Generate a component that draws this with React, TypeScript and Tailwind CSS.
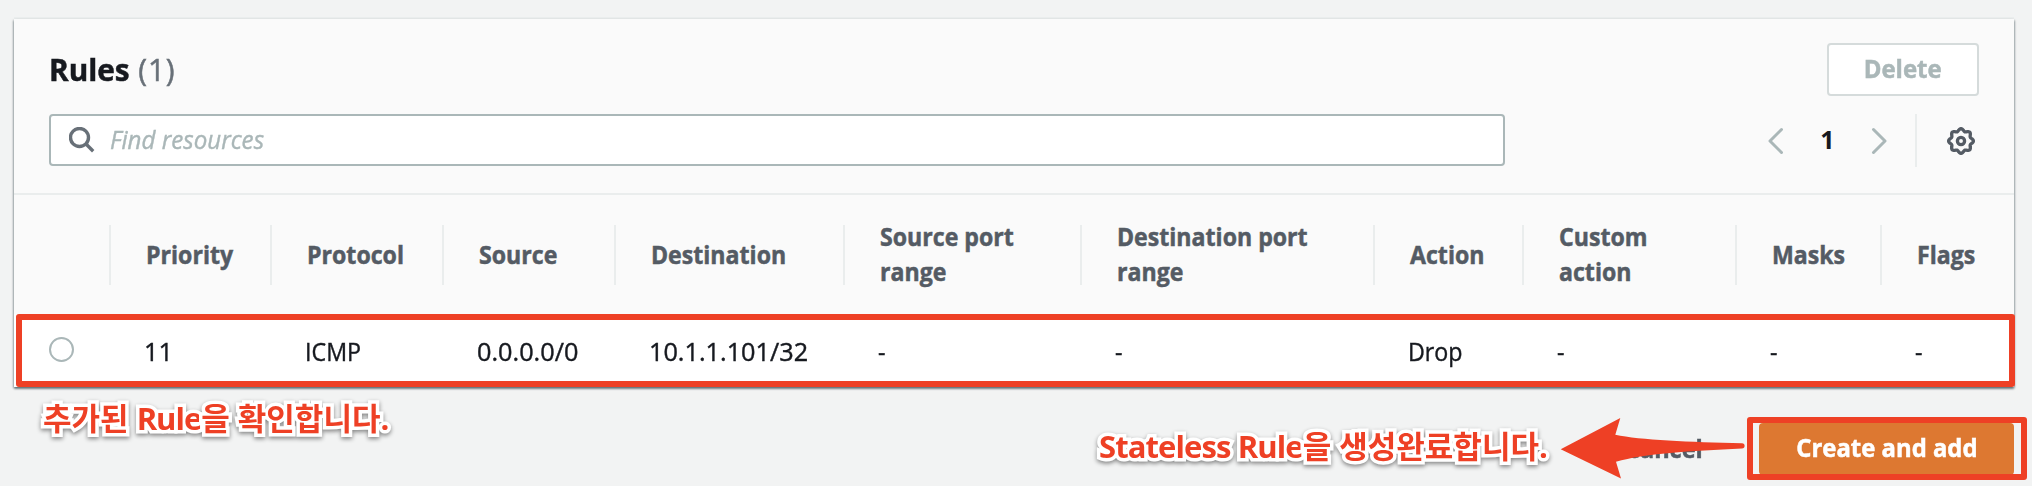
const columns: { label: string; value: string; lines?: [string, string] }[] = [
  { label: "Priority", value: "11" },
  { label: "Protocol", value: "ICMP" },
  { label: "Source", value: "0.0.0.0/0" },
  { label: "Destination", value: "10.1.1.101/32" },
  { label: "Source port range", value: "-", lines: ["Source port", "range"] },
  { label: "Destination port range", value: "-", lines: ["Destination port", "range"] },
  { label: "Action", value: "Drop" },
  { label: "Custom action", value: "-", lines: ["Custom", "action"] },
  { label: "Masks", value: "-" },
  { label: "Flags", value: "-" },
];

const grid = "grid grid-cols-[95px_161px_172px_172px_229px_237px_293px_149px_213px_145px_134px]";

const noteText =
  "absolute whitespace-nowrap text-[31px] leading-[40px] font-bold text-[#ee4025] [-webkit-text-stroke:7px_white] [paint-order:stroke_fill] [filter:drop-shadow(0_2px_2px_rgba(0,0,0,0.45))]";

function SearchIcon() {
  return (
    <svg className="size-[26px] shrink-0" viewBox="0 0 26 26" fill="none" stroke="#687078" strokeWidth="3.4">
      <circle cx="10.5" cy="10.5" r="9" />
      <path d="M16.8 16.8 24.2 24.2" />
    </svg>
  );
}

function Chevron({ flip }: { flip?: boolean }) {
  return (
    <svg className={flip ? "h-7 w-4 -scale-x-100" : "h-7 w-4"} viewBox="0 0 16 28" fill="none" stroke="#aab7b8" strokeWidth="3" strokeLinecap="round" strokeLinejoin="round">
      <path d="M13.5 2.5 2 14l11.5 11.5" />
    </svg>
  );
}

// Eight-toothed outline: a circle whose radius swings once per tooth.
const gearOutline = Array.from({ length: 96 }, (_, i) => {
  const a = (i / 96) * Math.PI * 2;
  const r = 11.2 + 1.2 * Math.cos(8 * a);
  return `${(14 + r * Math.cos(a)).toFixed(2)},${(14 + r * Math.sin(a)).toFixed(2)}`;
}).join(" ");

function GearIcon() {
  return (
    <svg className="size-7" viewBox="0 0 28 28" fill="none" stroke="#545b64" strokeWidth="3.3" strokeLinejoin="round">
      <polygon points={gearOutline} />
      <circle cx="14" cy="14" r="3.6" />
    </svg>
  );
}

export default function App() {
  return (
    <div className="relative h-[486px] w-[2032px] overflow-hidden bg-[#f2f3f3] pt-[19px] font-['Open_Sans','Noto_Sans_CJK_KR',sans-serif] text-[25px] text-[#16191f]">
      <section className="ml-[14px] h-[368px] w-[2000px] bg-[#fafafa] shadow-[0_2px_2px_0_rgba(0,28,36,0.4),1px_1px_2px_0_rgba(0,28,36,0.22),-1px_1px_2px_0_rgba(0,28,36,0.22),0_-2px_0_0_#eaeded]">
        <header className="flex h-44 flex-col border-b-2 border-[#eaeded] pt-6 pr-[35px] pl-[35px]">
          <div className="flex h-[53px] items-center justify-between">
            <h2 className="origin-left scale-x-[0.96] pb-px text-[31px] leading-[50px] font-bold [-webkit-text-stroke:0.5px_#16191f]">
              Rules <span className="ml-px font-medium tracking-[0.8px] text-[#687078] [-webkit-text-stroke:0.5px_#687078]">(1)</span>
            </h2>
            <button className="h-[53px] w-[152px] rounded-[4px] border-2 border-[#d5dbdb] bg-white pb-0.5 font-bold text-[#aab7b8]">
              <span className="inline-block scale-x-[0.96] [-webkit-text-stroke:0.5px_#aab7b8]">Delete</span>
            </button>
          </div>
          <div className="mt-[18px] flex items-start">
            <label className="flex h-[52px] w-[1456px] items-center gap-[15px] rounded-[4px] border-2 border-[#aab7b8] bg-white pl-[18px]">
              <SearchIcon />
              <span className="inline-block origin-left scale-x-[0.965] pb-px text-[#aab7b8] italic [-webkit-text-stroke:0.4px_#aab7b8]">Find resources</span>
            </label>
            <nav className="ml-auto flex h-[53px] items-center">
              <Chevron />
              <span className="w-[87px] pb-px text-center font-bold">1</span>
              <Chevron flip />
              <span className="ml-[28px] h-[53px] w-0.5 bg-[#eaeded]" />
              <span className="mr-1 ml-[30px]">
                <GearIcon />
              </span>
            </nav>
          </div>
        </header>

        <div className={`${grid} h-[119px] pt-[30px]`}>
          <span />
          {columns.map((c) => (
            <div key={c.label} className="flex h-[60px] items-center border-l-2 border-[#eaeded] pl-[35px] leading-[35px] font-bold text-[#545b64] [-webkit-text-stroke:0.5px_#545b64]">
              <span className="origin-left -translate-y-px scale-x-[0.925] whitespace-nowrap">
                {c.lines ? (
                  <>
                    {c.lines[0]}
                    <br />
                    {c.lines[1]}
                  </>
                ) : (
                  c.label
                )}
              </span>
            </div>
          ))}
        </div>

        <div className={`${grid} h-[73px] items-center bg-white`}>
          <span className="mb-0.5 ml-[35px] size-[25px] rounded-full border-2 border-[#aab7b8] bg-white" />
          {columns.map((c) => (
            <div key={c.label} className="pt-0.5 pl-[35px] [-webkit-text-stroke:0.4px_#16191f]">
              <span className={/\d/.test(c.value) ? "inline-block origin-left scale-x-[1.01]" : "inline-block origin-left scale-x-[0.93]"}>{c.value}</span>
            </div>
          ))}
        </div>
      </section>

      <footer className="mt-[36px] flex h-[52px] items-center justify-end pr-[18px] font-bold">
        <span className="mr-[56px] inline-block origin-right scale-x-[0.94] text-[#545b64] [-webkit-text-stroke:0.5px_#545b64]">Cancel</span>
        <button className="h-[52px] w-[255px] rounded-[4px] bg-[#dd7831] pb-0.5 text-white">
          <span className="inline-block scale-x-[0.955] [-webkit-text-stroke:0.5px_white]">Create and add</span>
        </button>
      </footer>

      <div className="absolute top-[314px] left-[16px] h-[73px] w-[1999px] rounded-[3px] border-[6px] border-[#ee4025]" />
      <div className="absolute top-[417px] left-[1747px] h-[63px] w-[280px] rounded-[3px] border-[6px] border-[#ee4025]" />
      <svg className="absolute top-[410px] left-[1550px] h-[76px] w-[200px]" viewBox="1550 410 200 76" fill="#ee4025">
        <path d="M1560.7 449.3 1620.3 418 1615.3 434.7C1640 440 1690 442 1742 443.2a2.6 2.6 0 0 1 0 5.2C1690 451 1645 453 1616 461.8L1621 478.4Z" />
      </svg>
      <p className={`${noteText} top-[398px] left-[43px]`}>
        추가된 <span className="tracking-[-1px]">Rule</span>을 확인합니다.
      </p>
      <p className={`${noteText} top-[426px] left-[1099px]`}>
        <span className="tracking-[-0.9px]">Stateless Rule</span>을 생성완료합니다.
      </p>
    </div>
  );
}
